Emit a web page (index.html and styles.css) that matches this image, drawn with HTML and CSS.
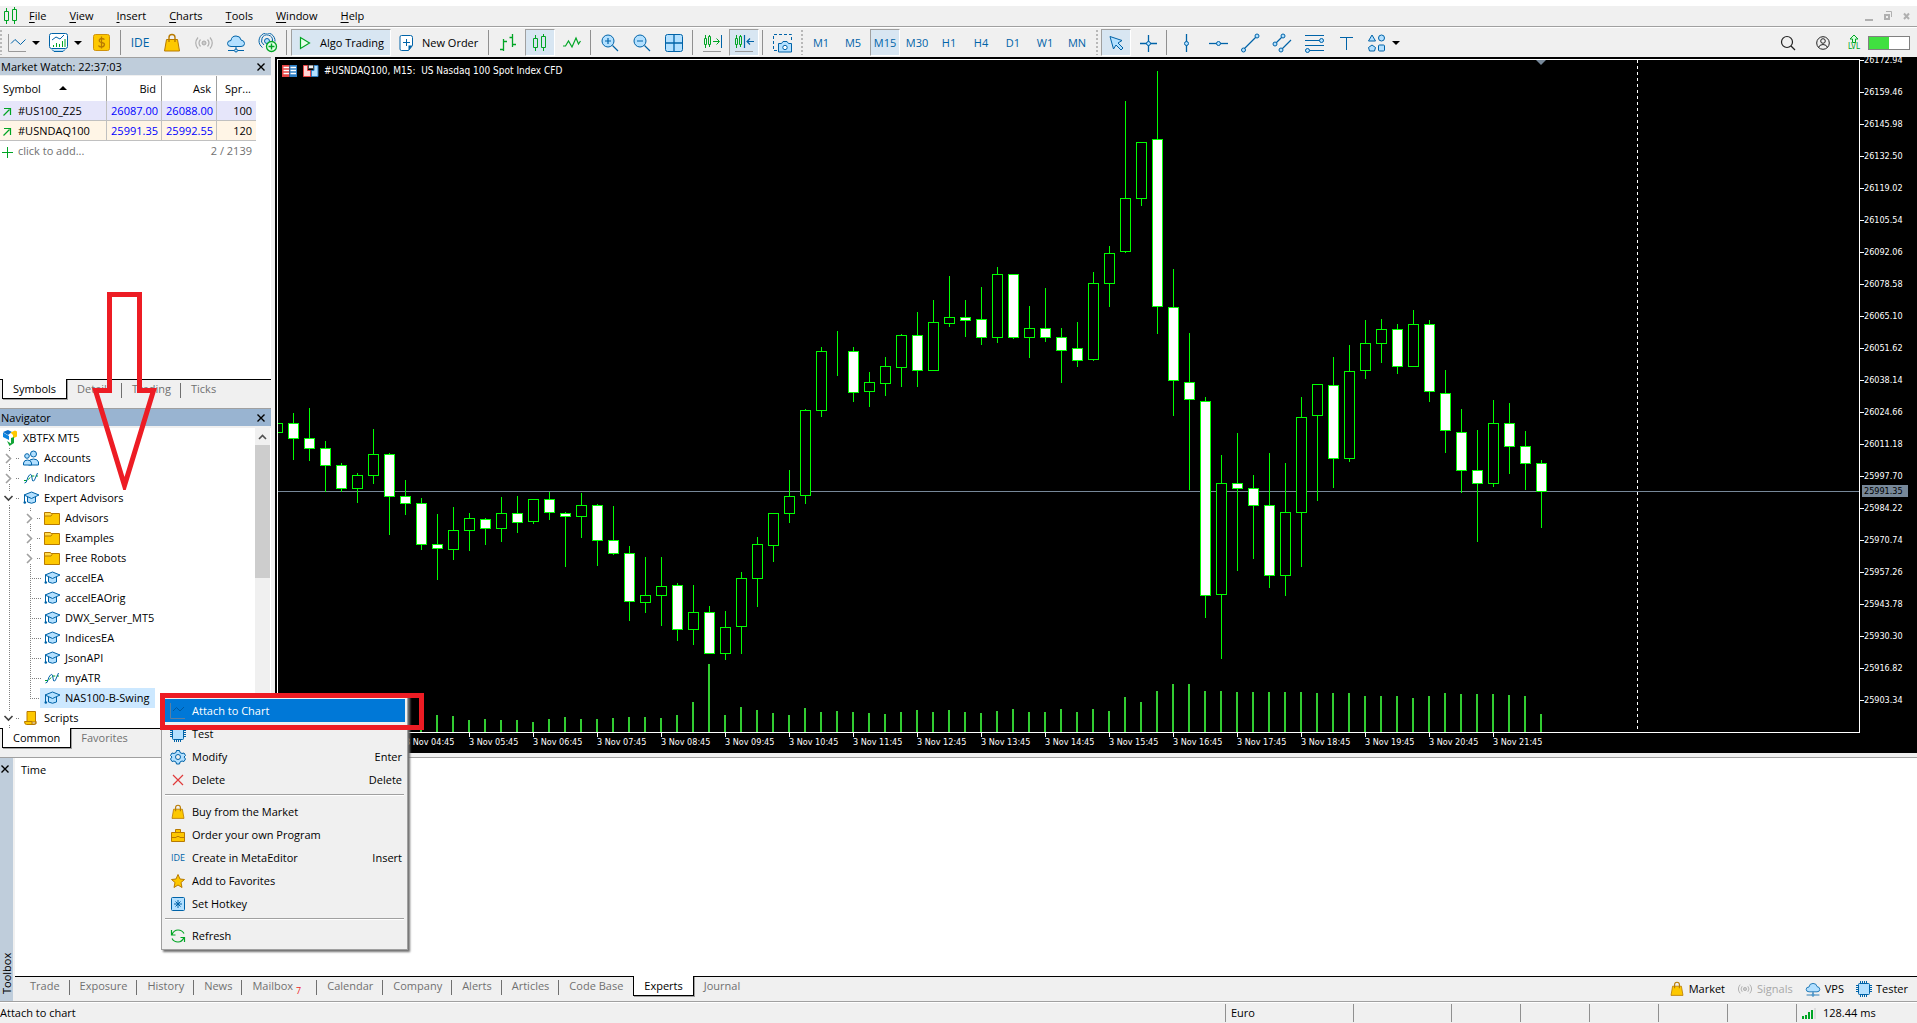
FILE: index.html
```html
<!DOCTYPE html>
<html lang="en">
<head>
<meta charset="utf-8">
<title>#USNDAQ100, M15</title>
<link rel="stylesheet" href="styles.css">
</head>
<body>
<svg class="sprite" aria-hidden="true">
  <defs>
    <symbol id="i-candles" viewBox="0 0 20 20"><path d="M5.500 2v3M5.500 15v3M13.500 1v3M13.500 14v4" stroke="#00a524"/><path d="M3.500 5.500h4v9h-4zM11.500 3.500h4v11h-4z" fill="none" stroke="#00a524"/></symbol>
    <symbol id="i-line" viewBox="0 0 20 20"><path d="M1.500 1v17.500H19" fill="none" stroke="#999"/><path d="M4 10.500l4-4 5.500 5 5-5" fill="none" stroke="#0063a8"/></symbol>
    <symbol id="i-indic" viewBox="0 0 20 20"><rect x=".5" y=".5" width="18" height="15" rx="2" fill="#fff" stroke="#0063a8"/><path d="M3 16.500l2 2h9l2-2" fill="#b3dcf8" stroke="#0063a8"/><path d="M3 7l4-3 4 2 4-4" fill="none" stroke="#0063a8"/><path d="M4.500 14v-2M7.500 14v-4M10.500 14v-3M13.500 14V8M16 14V6" stroke="#00a524"/></symbol>
    <symbol id="i-dollar" viewBox="0 0 20 20"><rect x="1.500" y="1.500" width="16" height="16" rx="2" fill="#fdc800" stroke="#d0930a"/><path d="M12.500 6.500Q9.500 4.500 7.500 6.500q-1 2.500 2 3t3 2q-.5 2.500-3 2.500t-3-1.500M9.500 3.500v12" fill="none" stroke="#b87a00" stroke-width="1.300"/></symbol>
    <symbol id="i-bag" viewBox="0 0 20 20"><path d="M4.500 6.500h11l2 11.500h-15z" fill="#fdc800" stroke="#b87a00"/><path d="M7 9V4.500Q7 1.500 10 1.500t3 3V9" fill="none" stroke="#b87a00" stroke-width="1.400"/></symbol>
    <symbol id="i-signal" viewBox="0 0 20 20"><circle cx="10" cy="10" r="2" fill="#ccc" stroke="#aaa"/><path d="M6.500 6.500q-3 3.500 0 7M13.500 6.500q3 3.500 0 7M4 4.500q-4.500 5.500 0 11M16 4.500q4.500 5.500 0 11" fill="none" stroke="#b0b0b0" stroke-width="1.200"/></symbol>
    <symbol id="i-cloud" viewBox="0 0 20 20"><path d="M5 13.500q-3.500 0-3.500-3t3.500-3q.5-4.500 5-4.500t5 4q3.500.5 3.500 3.500t-3.500 3z" fill="#b3e0ff" stroke="#0063a8"/><path d="M10 13.500V16M2 17.500h6M12 17.500h6" stroke="#0063a8"/><circle cx="10" cy="17.500" r="1.500" fill="#b3e0ff" stroke="#0063a8"/></symbol>
    <symbol id="i-copy" viewBox="0 0 20 20"><path d="M4.500 14.500a8 8 0 1 1 12.500-6M6 12a5.500 5.500 0 1 1 8.500-4" fill="none" stroke="#0063a8"/><circle cx="9" cy="8" r="2.500" fill="#b3e0ff" stroke="#0063a8"/><circle cx="13.500" cy="13.500" r="5" fill="#dfffe5" stroke="#00a524" stroke-width="1.300"/><path d="M13.500 10.500v6M10.500 13.500h6" stroke="#00a524" stroke-width="1.400"/></symbol>
    <symbol id="i-play" viewBox="0 0 20 20"><path d="M5.500 4.500v11l9-5.500z" fill="#e6ffea" stroke="#00a524" stroke-width="1.200"/></symbol>
    <symbol id="i-neworder" viewBox="0 0 20 20"><path d="M4.500 2.500h9q2 0 2 2v8l-4 5h-7q-1.500 0-1.500-1.500V4q0-1.500 1.500-1.500z" fill="#fff" stroke="#0063a8"/><path d="M15.500 12.500h-4v5z" fill="#0063a8"/><path d="M9.500 6v7M6 9.500h7" stroke="#0063a8"/></symbol>
    <symbol id="i-bars" viewBox="0 0 20 20"><path d="M5.500 6v12M2 16.500h3.500M5.500 8.500H9M14.500 1v13M11.500 4.500h3M14.500 11.500H18" stroke="#00a524" stroke-width="1.300"/></symbol>
    <symbol id="i-zig" viewBox="0 0 20 20"><path d="M1 13h2.500l3-5 3.500 6 4-9 2.500 6 2-3" fill="none" stroke="#00a524" stroke-width="1.200"/></symbol>
    <symbol id="i-zoomin" viewBox="0 0 20 20"><circle cx="8" cy="8" r="6" fill="#b3e0ff" stroke="#0063a8"/><path d="M12.500 12.500L18 18M8 5v6M5 8h6" stroke="#0063a8" stroke-width="1.200"/></symbol>
    <symbol id="i-zoomout" viewBox="0 0 20 20"><circle cx="8" cy="8" r="6" fill="#b3e0ff" stroke="#0063a8"/><path d="M12.500 12.500L18 18M5 8h6" stroke="#0063a8" stroke-width="1.200"/></symbol>
    <symbol id="i-grid" viewBox="0 0 20 20"><rect x="1.500" y="1.500" width="17" height="17" rx="2" fill="#b3e0ff" stroke="#0063a8"/><path d="M10 1.500v17M1.500 10h17" stroke="#0063a8" stroke-width="1.300"/></symbol>
    <symbol id="i-scroll" viewBox="0 0 20 20"><path d="M3.500 2v3M3.500 12v3M7.500 2v1M7.500 12v2M2.500 5.500h2v6h-2zM6.500 3.500h2v8h-2zM11 8.500h6M14.500 5.500l3 3-3 3" fill="none" stroke="#00a524"/><path d="M19.500 2v13" stroke="#0063a8"/><path d="M1 18.500h18" stroke="#999"/></symbol>
    <symbol id="i-shift" viewBox="0 0 20 20"><path d="M2.500 2v3M2.500 12v3M6.500 2v1M6.500 12v2M1.500 5.500h2v6h-2zM5.500 3.500h2v8h-2z" fill="none" stroke="#00a524"/><path d="M10.500 2v13M13 8.500h7M16 5.500l-3 3 3 3" fill="none" stroke="#0063a8" stroke-width="1.200"/><path d="M1 18.500h18" stroke="#999"/></symbol>
    <symbol id="i-camera" viewBox="0 0 20 20"><path d="M5 17.500H1.500v-16h18V7" fill="none" stroke="#0063a8" stroke-dasharray="3 2"/><path d="M6.500 10.500h3l1.500-2h4l1.500 2h3v8.500h-13z" fill="#b3e0ff" stroke="#0063a8"/><circle cx="13" cy="14.500" r="2.200" fill="#fff" stroke="#0063a8"/></symbol>
    <symbol id="i-cursor" viewBox="0 0 20 20"><path d="M4 3.500l12 4-4 2.500 5 5-2 2-5-5-2.500 4z" fill="#b3e0ff" stroke="#0063a8"/></symbol>
    <symbol id="i-cross" viewBox="0 0 20 20"><path d="M10.500 2v17M2 10.500h17" stroke="#0063a8" stroke-width="1.300"/><circle cx="10.500" cy="10.500" r="2" fill="#b3e0ff" stroke="#0063a8"/></symbol>
    <symbol id="i-vline" viewBox="0 0 20 20"><path d="M10.500 1v18" stroke="#0063a8" stroke-width="1.300"/><circle cx="10.500" cy="10.500" r="2" fill="#b3e0ff" stroke="#0063a8"/></symbol>
    <symbol id="i-hline" viewBox="0 0 20 20"><path d="M1 10.500h19" stroke="#0063a8" stroke-width="1.300"/><circle cx="10.500" cy="10.500" r="2" fill="#b3e0ff" stroke="#0063a8"/></symbol>
    <symbol id="i-trend" viewBox="0 0 20 20"><path d="M3 17L17 3" stroke="#0063a8" stroke-width="1.200"/><circle cx="3.500" cy="17" r="2" fill="#b3e0ff" stroke="#0063a8"/><circle cx="17" cy="3" r="2" fill="#b3e0ff" stroke="#0063a8"/></symbol>
    <symbol id="i-channel" viewBox="0 0 20 20"><path d="M3 11l8-8M9 17L19 7" stroke="#0063a8" stroke-width="1.200"/><circle cx="3" cy="11" r="2" fill="#b3e0ff" stroke="#0063a8"/><circle cx="11" cy="3" r="2" fill="#b3e0ff" stroke="#0063a8"/><circle cx="9" cy="17" r="2" fill="#b3e0ff" stroke="#0063a8"/></symbol>
    <symbol id="i-fibo" viewBox="0 0 20 20"><path d="M1 2.500h19M1 7.500h19M1 12.500h19M1 17.500h19" stroke="#0063a8"/><circle cx="17.500" cy="7.500" r="2" fill="#b3e0ff" stroke="#0063a8"/><circle cx="3.500" cy="17.500" r="2" fill="#b3e0ff" stroke="#0063a8"/></symbol>
    <symbol id="i-text" viewBox="0 0 20 20"><path d="M4 4.500h13M10.500 4.500V17" stroke="#0063a8"/></symbol>
    <symbol id="i-shapes" viewBox="0 0 20 20"><g fill="#b3e0ff" stroke="#0063a8"><path d="M5 2l3.500 6h-7z"/><circle cx="14.500" cy="5" r="3"/><path d="M5 12l3.500 2.500L7.500 18h-5l-1-3.500z"/><rect x="11.500" y="12" width="6" height="6" rx="1"/></g></symbol>
    <symbol id="i-search" viewBox="0 0 20 20"><circle cx="9" cy="9" r="5.500" fill="none" stroke="#222" stroke-width="1.200"/><path d="M13 13l4 4" stroke="#222" stroke-width="1.200"/></symbol>
    <symbol id="i-user" viewBox="0 0 20 20"><g fill="none" stroke="#222"><circle cx="10" cy="10" r="6.300"/><circle cx="10" cy="8" r="2.300"/><path d="M5.500 14.500q1-3 4.500-3t4.500 3"/></g></symbol>
    <symbol id="i-up" viewBox="0 0 12 9"><path d="M6 1l4 4H7.500v3.500h-3V5H2z" fill="#d8ffe0" stroke="#00a524"/></symbol>
    <symbol id="i-uparrow" viewBox="0 0 10 10"><path d="M1.500 8.500l6-6M2 1.500h6.500V8" fill="none" stroke="#00a524" stroke-width="1.200"/></symbol>
    <symbol id="i-plus" viewBox="0 0 12 12"><path d="M6.500 1v11M1 6.500h11" stroke="#00a524"/></symbol>
    <symbol id="i-close" viewBox="0 0 10 10"><path d="M1.500 1.500l7 7M8.500 1.500l-7 7" stroke="#000" stroke-width="1.400"/></symbol>
    <symbol id="i-logo" viewBox="0 0 16 16"><path d="M1 2.500L7 6v4L1 7z" fill="#0a84e0"/><path d="M1 2l5-2 4 2-4 3z" fill="#0a6fc9"/><path d="M8.500 2.500L13 .5l2 1v5L11 8.500V5z" fill="#fdc800"/><path d="M5 11l4 2.500V8l3-1v6L7.500 16z" fill="#12a537"/></symbol>
    <symbol id="i-accounts" viewBox="0 0 16 16"><g fill="#b3e0ff" stroke="#0063a8"><circle cx="10.500" cy="4" r="3"/><path d="M5.500 15v-3q1-3 5-3t5 3v3z"/><circle cx="4" cy="6" r="2.300"/><path d="M.5 15v-2q.5-3 4-3t4 3v2z"/></g></symbol>
    <symbol id="i-func" viewBox="0 0 16 16"><path d="M1 10.500h3L9 6h6" fill="none" stroke="#00a524" stroke-dasharray="3 1.500"/><path d="M1.500 13q2 0 2.500-3t2.500-5 2.500 3 2.500 2l3-7" fill="none" stroke="#0063a8"/></symbol>
    <symbol id="i-hat" viewBox="0 0 16 16"><path d="M4.500 7v5q4 2.500 8 0V7" fill="#b3e0ff" stroke="#0063a8"/><path d="M1 5l7.500-3L16 5 8.500 8.500z" fill="#b3e0ff" stroke="#0063a8"/><path d="M1.500 5v7" stroke="#0063a8"/><circle cx="1.800" cy="12.500" r="1.300" fill="#0063a8"/></symbol>
    <symbol id="i-folder" viewBox="0 0 16 16"><path d="M.5 3.500h15v11H.5z" fill="#fdc800" stroke="#b87a00"/><path d="M.5 5V2.500h6l1.500 2-1 1.500H.5z" fill="#ffdc4d" stroke="#b87a00"/></symbol>
    <symbol id="i-script" viewBox="0 0 16 16"><path d="M4 1.500h8.500V12H4z" fill="#fdc800" stroke="#b87a00"/><path d="M1.500 11.500H9V14h4v-2.500q0 3-2 3H3.500q-2 0-2-3z" fill="#fdc800" stroke="#b87a00"/></symbol>
    <symbol id="i-chip" viewBox="0 0 16 16"><path d="M4.500 0v16M6.500 0v16M8.500 0v16M10.500 0v16M0 4.500h16M0 6.500h16M0 8.500h16M0 10.500h16" stroke="#0063a8"/><rect x="2.500" y="2.500" width="11" height="11" rx="1" fill="#b3e0ff" stroke="#0063a8"/></symbol>
    <symbol id="i-gear" viewBox="0 0 16 16"><path d="M6.500 1.500h3l.5 2 2 1 2-.5 1.500 2.500-1.500 1.500 1.500 2-1.500 2.500-2-.5-2 1-.5 2h-3l-.5-2-2-1-2 .5L.5 10 2 8 .5 6.500 2 4l2 .5 2-1z" fill="#b3e0ff" stroke="#0063a8"/><circle cx="8" cy="8" r="2.500" fill="#f0f0f0" stroke="#0063a8"/></symbol>
    <symbol id="i-delete" viewBox="0 0 16 16"><path d="M3 3l10 10M13 3L3 13" stroke="#e03a3a" stroke-width="1.200"/></symbol>
    <symbol id="i-case" viewBox="0 0 16 16"><path d="M1.500 5.500h13v9h-13zM5.500 5V2.500h5V5" fill="#fdc800" stroke="#b87a00"/><path d="M1.500 10.500h5M9.500 10.500h5M6.500 9.500h3" stroke="#b87a00"/></symbol>
    <symbol id="i-star" viewBox="0 0 16 16"><path d="M8 1.500l2 4.500 4.500.5L11 9.500l1 5-4-2.500-4 2.500 1-5L1.500 6.500 6 6z" fill="#fdc800" stroke="#b87a00"/></symbol>
    <symbol id="i-hotkey" viewBox="0 0 16 16"><rect x="1.500" y="1.500" width="13" height="13" rx="1" fill="#b3e0ff" stroke="#0063a8"/><path d="M8 4v8M4 8h8M5.500 5.500l5 5M10.500 5.500l-5 5" stroke="#0063a8"/></symbol>
    <symbol id="i-refresh" viewBox="0 0 16 16"><path d="M2 6.500q2-4.500 6-4.500t6 3.500M1.500 2v5h4M14 9.500q-2 4.500-6 4.500t-6-3.500M14.500 14V9.500h-4" fill="none" stroke="#00a524" stroke-width="1.200"/></symbol>
    <symbol id="i-lineblue" viewBox="0 0 16 16"><path d="M.5 0v15.500H15" fill="none" stroke="#5c7fa0"/><path d="M3 8l3.500-3.500L10 8l4-4" fill="none" stroke="#0058a0"/></symbol>
    <symbol id="i-depth" viewBox="0 0 16 12"><path d="M0 0h7.500v12H0z" fill="#e64545"/><path d="M7.500 0H15v12H7.500z" fill="#2f7fc4"/><path d="M1.500 2.500H7M1.500 5.500H7M1.500 8.500H7M8.500 2.500H14M8.500 5.500H14M8.500 8.500H14" stroke="#fff" stroke-width="1.500"/></symbol>
    <symbol id="i-oneclick" viewBox="0 0 16 12"><path d="M.5 .5h4v5h3v6h-7z" fill="#ffd6d6" stroke="#e64545"/><path d="M15 .5h-4v5H8.500v6H15z" fill="#b3e0ff" stroke="#2f7fc4"/><path d="M5.500 0h5v3.500h-5z" fill="#eee" stroke="#444"/></symbol>
    <symbol id="t-closed" viewBox="0 0 21 20"><path d="M8.500 0v4M8.500 16v4M15 10.500h4" stroke="#808080" stroke-dasharray="1 1"/><path d="M5 6l4.500 4.500L5 15" fill="none" stroke="#a0a0a0" stroke-width="1.600"/></symbol>
    <symbol id="t-open" viewBox="0 0 21 20"><path d="M8.500 0v3M8.500 17v3M15 10.500h4" stroke="#808080" stroke-dasharray="1 1"/><path d="M3.500 8l4 4 4-4" fill="none" stroke="#404040" stroke-width="1.600"/></symbol>
    <symbol id="t-guide" viewBox="0 0 21 20"><path d="M8.500 0v20" stroke="#808080" stroke-dasharray="1 1"/></symbol>
    <symbol id="t-leaf" viewBox="0 0 21 20"><path d="M8.500 0v20M8 10.500h11" stroke="#808080" stroke-dasharray="1 1"/></symbol>
    <symbol id="t-last" viewBox="0 0 21 20"><path d="M8.500 0v11M8 10.500h11" stroke="#808080" stroke-dasharray="1 1" fill="none"/></symbol>
  </defs>
</svg>

<div class="app">
  <header>
    <div class="caption"></div>
    <nav class="menubar">
      <svg class="ic20"><use href="#i-candles"/></svg>
      <button><u>F</u>ile</button><button><u>V</u>iew</button><button><u>I</u>nsert</button><button><u>C</u>harts</button><button><u>T</u>ools</button><button><u>W</u>indow</button><button><u>H</u>elp</button>
      <span class="winctl"><svg width="50" height="12"><path d="M0 9h8v2H0z" fill="#b0b0b0"/><path d="M20 5h4v4h-4z" fill="none" stroke="#b0b0b0" stroke-width="2"/><path d="M21 1.500h5.500V7" fill="none" stroke="#b0b0b0"/><path d="M39 3.500l5 5.500M44 3.500L39 9" stroke="#b0b0b0" stroke-width="2"/></svg></span>
    </nav>
    <div class="toolbar">
      <span class="grip first"></span>
      <button class="tb drop" aria-label="Chart type"><svg class="ic20"><use href="#i-line"/></svg><i class="caret"></i></button>
      <button class="tb drop" aria-label="Indicators"><svg class="ic20"><use href="#i-indic"/></svg><i class="caret"></i></button>
      <button class="tb" aria-label="Symbols"><svg class="ic20"><use href="#i-dollar"/></svg></button>
      <span class="sep"></span>
      <button class="tb big">IDE</button>
      <button class="tb" aria-label="Market"><svg class="ic20"><use href="#i-bag"/></svg></button>
      <button class="tb" aria-label="Signals"><svg class="ic20"><use href="#i-signal"/></svg></button>
      <button class="tb" aria-label="VPS"><svg class="ic20"><use href="#i-cloud"/></svg></button>
      <button class="tb" aria-label="Add server"><svg class="ic20"><use href="#i-copy"/></svg></button>
      <span class="sep"></span>
      <button class="tb wide algo on"><svg class="ic20"><use href="#i-play"/></svg>Algo Trading</button>
      <button class="tb wide order"><svg class="ic20"><use href="#i-neworder"/></svg>New Order</button>
      <span class="sep"></span>
      <button class="tb" aria-label="Bars"><svg class="ic20"><use href="#i-bars"/></svg></button>
      <button class="tb on" aria-label="Candles"><svg class="ic20"><use href="#i-candles"/></svg></button>
      <button class="tb" aria-label="Line"><svg class="ic20"><use href="#i-zig"/></svg></button>
      <span class="sep"></span>
      <button class="tb" aria-label="Zoom in"><svg class="ic20"><use href="#i-zoomin"/></svg></button>
      <button class="tb" aria-label="Zoom out"><svg class="ic20"><use href="#i-zoomout"/></svg></button>
      <button class="tb" aria-label="Tile windows"><svg class="ic20"><use href="#i-grid"/></svg></button>
      <span class="sep"></span>
      <button class="tb" aria-label="Auto scroll"><svg class="ic20"><use href="#i-scroll"/></svg></button>
      <button class="tb on" aria-label="Chart shift"><svg class="ic20"><use href="#i-shift"/></svg></button>
      <span class="sep"></span>
      <button class="tb" aria-label="Screenshot"><svg class="ic20"><use href="#i-camera"/></svg></button>
      <span class="grip"></span>
      <button class="tb">M1</button><button class="tb">M5</button><button class="tb on">M15</button><button class="tb">M30</button><button class="tb">H1</button><button class="tb">H4</button><button class="tb">D1</button><button class="tb">W1</button><button class="tb">MN</button>
      <span class="grip"></span>
      <button class="tb on" aria-label="Cursor"><svg class="ic20"><use href="#i-cursor"/></svg></button>
      <button class="tb" aria-label="Crosshair"><svg class="ic20"><use href="#i-cross"/></svg></button>
      <span class="sep"></span>
      <button class="tb" aria-label="Vertical line"><svg class="ic20"><use href="#i-vline"/></svg></button>
      <button class="tb" aria-label="Horizontal line"><svg class="ic20"><use href="#i-hline"/></svg></button>
      <button class="tb" aria-label="Trendline"><svg class="ic20"><use href="#i-trend"/></svg></button>
      <button class="tb" aria-label="Channel"><svg class="ic20"><use href="#i-channel"/></svg></button>
      <button class="tb" aria-label="Fibonacci"><svg class="ic20"><use href="#i-fibo"/></svg></button>
      <button class="tb" aria-label="Text"><svg class="ic20"><use href="#i-text"/></svg></button>
      <button class="tb drop" aria-label="Shapes"><svg class="ic20"><use href="#i-shapes"/></svg><i class="caret"></i></button>
      <div class="tools-right">
        <button aria-label="Search"><svg class="ic20"><use href="#i-search"/></svg></button>
        <button aria-label="Profile"><svg class="ic20"><use href="#i-user"/></svg></button>
        <span class="level"><span class="lvl"><svg width="12" height="9"><use href="#i-up"/></svg>LVL</span><span class="battery"></span></span>
      </div>
    </div>
  </header>

  <main>
    <aside>
      <section class="panel watch">
        <h2 class="bar">Market Watch: 22:37:03<button aria-label="Close"><svg width="10" height="10"><use href="#i-close"/></svg></button></h2>
        <div class="body">
          <table>
            <colgroup><col class="c-sym"><col class="c-num"><col class="c-num"><col class="c-spr"></colgroup>
            <thead><tr><th>Symbol<i class="sort"></i></th><th>Bid</th><th>Ask</th><th>Spr...</th></tr></thead>
            <tbody>
              <tr class="a"><td><svg width="10" height="10"><use href="#i-uparrow"/></svg>#US100_Z25</td><td>26087.00</td><td>26088.00</td><td>100</td></tr>
              <tr class="b"><td><svg width="10" height="10"><use href="#i-uparrow"/></svg>#USNDAQ100</td><td>25991.35</td><td>25992.55</td><td>120</td></tr>
            </tbody>
            <tfoot><tr><td colspan="2"><svg width="12" height="12"><use href="#i-plus"/></svg>click to add...</td><td colspan="2">2 / 2139</td></tr></tfoot>
          </table>
        </div>
        <div class="tabs"><button class="cur">Symbols</button><button class="div">Details</button><button class="div">Trading</button><button>Ticks</button></div>
      </section>
      <section class="panel navi">
        <h2 class="bar active">Navigator<button aria-label="Close"><svg width="10" height="10"><use href="#i-close"/></svg></button></h2>
        <div class="body split">
          <ul class="tree">
            <li><svg class="ic16"><use href="#i-logo"/></svg>XBTFX MT5</li>
            <li><svg class="tc"><use href="#t-closed"/></svg><svg class="ic16"><use href="#i-accounts"/></svg>Accounts</li>
            <li><svg class="tc"><use href="#t-closed"/></svg><svg class="ic16"><use href="#i-func"/></svg>Indicators</li>
            <li><svg class="tc"><use href="#t-open"/></svg><svg class="ic16"><use href="#i-hat"/></svg>Expert Advisors</li>
            <li><svg class="tc"><use href="#t-guide"/></svg><svg class="tc"><use href="#t-closed"/></svg><svg class="ic16"><use href="#i-folder"/></svg>Advisors</li>
            <li><svg class="tc"><use href="#t-guide"/></svg><svg class="tc"><use href="#t-closed"/></svg><svg class="ic16"><use href="#i-folder"/></svg>Examples</li>
            <li><svg class="tc"><use href="#t-guide"/></svg><svg class="tc"><use href="#t-closed"/></svg><svg class="ic16"><use href="#i-folder"/></svg>Free Robots</li>
            <li><svg class="tc"><use href="#t-guide"/></svg><svg class="tc"><use href="#t-leaf"/></svg><svg class="ic16"><use href="#i-hat"/></svg>accelEA</li>
            <li><svg class="tc"><use href="#t-guide"/></svg><svg class="tc"><use href="#t-leaf"/></svg><svg class="ic16"><use href="#i-hat"/></svg>accelEAOrig</li>
            <li><svg class="tc"><use href="#t-guide"/></svg><svg class="tc"><use href="#t-leaf"/></svg><svg class="ic16"><use href="#i-hat"/></svg>DWX_Server_MT5</li>
            <li><svg class="tc"><use href="#t-guide"/></svg><svg class="tc"><use href="#t-leaf"/></svg><svg class="ic16"><use href="#i-hat"/></svg>IndicesEA</li>
            <li><svg class="tc"><use href="#t-guide"/></svg><svg class="tc"><use href="#t-leaf"/></svg><svg class="ic16"><use href="#i-hat"/></svg>JsonAPI</li>
            <li><svg class="tc"><use href="#t-guide"/></svg><svg class="tc"><use href="#t-leaf"/></svg><svg class="ic16"><use href="#i-func"/></svg>myATR</li>
            <li><svg class="tc"><use href="#t-guide"/></svg><svg class="tc"><use href="#t-last"/></svg><span class="sel"><svg class="ic16"><use href="#i-hat"/></svg>NAS100-B-Swing</span></li>
            <li><svg class="tc"><use href="#t-open"/></svg><svg class="ic16"><use href="#i-script"/></svg>Scripts</li>
          </ul>
          <div class="scroll"><svg width="15" height="17"><path d="M4 11l3.500-3.500L11 11" fill="none" stroke="#505050" stroke-width="1.600"/></svg><span></span></div>
        </div>
        <div class="tabs"><button class="cur">Common</button><button>Favorites</button></div>
      </section>
    </aside>

    <section class="chart">
      <div class="plot">
        <svg id="plot" width="100%" height="100%"></svg>
        <p class="chart-title"><svg width="16" height="12"><use href="#i-depth"/></svg><svg width="16" height="12"><use href="#i-oneclick"/></svg>#USNDAQ100, M15:&nbsp; US Nasdaq 100 Spot Index CFD</p>
      </div>
      <ol class="prices" id="prices"></ol>
      <ol class="times" id="times"></ol>
    </section>
  </main>

  <section class="toolbox">
    <div class="side"><button aria-label="Close"><svg width="10" height="10"><use href="#i-close"/></svg></button><span>Toolbox</span></div>
    <div class="tbody">
      <table class="log"><thead><tr><th class="when">Time</th><th>Message</th></tr></thead></table>
      <div class="tabs">
        <button class="div">Trade</button><button class="div">Exposure</button><button class="div">History</button><button class="div">News</button><button class="div">Mailbox<sub>7</sub></button><button class="div">Calendar</button><button class="div">Company</button><button class="div">Alerts</button><button class="div">Articles</button><button>Code Base</button><button class="cur">Experts</button><button>Journal</button>
        <div class="services">
          <a href="#market"><svg class="ic16"><use href="#i-bag"/></svg>Market</a>
          <a href="#signals" class="off"><svg class="ic16"><use href="#i-signal"/></svg>Signals</a>
          <a href="#vps"><svg class="ic16"><use href="#i-cloud"/></svg>VPS</a>
          <a href="#tester"><svg class="ic16"><use href="#i-chip"/></svg>Tester</a>
        </div>
      </div>
    </div>
  </section>

  <footer>
    <span class="hint">Attach to chart</span><span class="s-profile">Euro</span><span class="s-wide"></span><span></span><span></span><span></span><span></span><span></span>
    <span class="s-ping"><svg width="14" height="11"><path d="M1 8v3M4 7v4M7 4v7M10 2v9" stroke="#00a524" stroke-width="2"/><path d="M13 0v11" stroke="#ddd" stroke-width="2"/></svg>128.44 ms</span>
  </footer>

  <div class="ctx" role="menu">
    <button class="hot" role="menuitem"><svg class="ic16"><use href="#i-lineblue"/></svg>Attach to Chart</button>
    <button role="menuitem"><svg class="ic16"><use href="#i-chip"/></svg>Test</button>
    <button role="menuitem"><svg class="ic16"><use href="#i-gear"/></svg>Modify<kbd>Enter</kbd></button>
    <button role="menuitem"><svg class="ic16"><use href="#i-delete"/></svg>Delete<kbd>Delete</kbd></button>
    <hr>
    <button role="menuitem"><svg class="ic16"><use href="#i-bag"/></svg>Buy from the Market</button>
    <button role="menuitem"><svg class="ic16"><use href="#i-case"/></svg>Order your own Program</button>
    <button role="menuitem"><b class="ide">IDE</b>Create in MetaEditor<kbd>Insert</kbd></button>
    <button role="menuitem"><svg class="ic16"><use href="#i-star"/></svg>Add to Favorites</button>
    <button role="menuitem"><svg class="ic16"><use href="#i-hotkey"/></svg>Set Hotkey</button>
    <hr>
    <button role="menuitem"><svg class="ic16"><use href="#i-refresh"/></svg>Refresh</button>
  </div>
  <div class="mark-box"></div>
  <svg class="mark-arrow" width="70" height="200"><path d="M19.500 4.500h30v96h14l-29 95-29-95h14z" fill="none" stroke="#ed1c24" stroke-width="5"/></svg>
</div>
<script src="chart.js"></script>
</body>
</html>
```
FILE: styles.css
```css
* { box-sizing: border-box; }
body {
  margin: 0;
  background: #f0f0f0;
  color: #000;
  font: 11px/16px "Open Sans", "Noto Sans", sans-serif;
}
button {
  border: 0;
  padding: 0;
  margin: 0;
  background: none;
  font: inherit;
  color: inherit;
  display: flex;
  align-items: center;
  white-space: nowrap;
}
svg { display: block; flex: none; }
ul, ol, h2, p { margin: 0; padding: 0; list-style: none; font-size: inherit; font-weight: 400; }
a { color: inherit; text-decoration: none; }
.sprite { position: absolute; width: 0; height: 0; }
.ic20 { width: 20px; height: 20px; }
.ic16 { width: 16px; height: 16px; }

.app { position: relative; min-height: 100vh; display: flex; flex-direction: column; overflow: hidden; }

/* menu bar */
.caption { height: 6px; background: #fff; }
.menubar { display: flex; align-items: center; height: 22px; gap: 23px; border-bottom: 1px solid #fff; box-shadow: inset 0 -1px #a0a0a0; padding: 0 2px 2px 0; }
.menubar .ic20 { margin-right: -15px; }
.menubar > svg { margin-left: 1px; }
.menubar u { text-underline-offset: 2px; }
.winctl { margin-left: auto; }

/* toolbar */
.toolbar { display: flex; align-items: center; height: 29px; }
.tb { width: 32px; height: 27px; flex: none; justify-content: center; color: #0063a8; border: 1px solid transparent; background-clip: padding-box; }
.tb.on { background: #d8e6f2; border-color: #a0a0a0 #fff #fff #a0a0a0; width: 30px; margin: 0 1px; }
.tb.big { font-size: 12px; }
.tb.wide { color: #000; justify-content: flex-start; gap: 5px; }
.tb.algo { width: 100px; padding-left: 3px; }
.tb.order { width: 94px; padding-left: 4px; }
.tb.drop { width: 42px; gap: 5px; }
.caret { border: 4px solid transparent; border-top-color: #000; border-bottom: 0; }
.sep { flex: none; width: 1px; height: 25px; margin: 0 3px 0 2px; background: #909090; }
.grip { flex: none; width: 2px; height: 25px; margin: 0 2px 0 3px; background: repeating-linear-gradient(#b8b8b8 0 2px, transparent 2px 4px); }
.grip.first { margin: 0; }
.tools-right { margin-left: auto; display: flex; align-items: center; gap: 15px; padding-right: 7px; }
.level { display: flex; align-items: center; gap: 8px; }
.lvl { display: flex; flex-direction: column; align-items: center; color: #00a524; font: 8px/8px "DejaVu Sans Condensed", "DejaVu Sans", sans-serif; }
.battery { width: 42px; height: 14px; border: 1px solid #808080; background: linear-gradient(90deg, #40e040 50%, #fff 50%); }

/* main area */
main { flex: 1; display: flex; gap: 4px; }
aside { width: 271px; display: flex; flex-direction: column; }
.panel { display: flex; flex-direction: column; }
.watch { flex: 1; }
.bar { display: flex; align-items: center; justify-content: space-between; height: 18px; padding: 0 5px 0 1px; background: #bfcddb; border-top: 1px solid #a0a0a0; }
.bar.active { background: #99b4d1; }
.body { flex: 1; background: #fff; }
.watch .body { margin-top: 1px; }
.watch table { width: 256px; table-layout: fixed; border-collapse: separate; border-spacing: 0; }
.c-sym { width: 107px; }
.c-num { width: 55px; }
.c-spr { width: 39px; }
.watch th { height: 25px; padding: 0 5px; font-weight: 400; text-align: right; border-right: 1px solid #a0a0a0; }
.watch th:first-child { text-align: left; padding-left: 3px; }
.watch th:last-child { border-right: 0; }
.sort { display: inline-block; margin: 0 0 3px 18px; border: 4px solid transparent; border-bottom-color: #000; border-top: 0; }
.watch td { height: 20px; padding: 0 3px; text-align: right; border-right: 1px solid #c0c0c0; border-bottom: 1px solid #c0c0c0; color: #00f; }
.watch td:first-child { text-align: left; padding-left: 2px; color: #000; }
.watch td:last-child { color: #000; border-right: 0; padding-right: 4px; }
.watch td svg { display: inline-block; margin-right: 6px; vertical-align: middle; }
.watch tfoot td:first-child { padding-left: 1px; }
.watch tfoot td svg { margin-right: 5px; }
.a td { background: #e6e6fa; }
.b td { background: #fff5e6; }
.watch tfoot td, .watch tfoot td:first-child, .watch tfoot td:last-child { border: 0; color: #707070; }

/* tab strips */
.tabs { display: flex; align-items: flex-start; height: 25px; padding-left: 2px; box-shadow: inset 0 1px #000; color: #707070; }
.watch .tabs { height: 29px; }
.tabs > button { position: relative; height: 20px; padding: 0 10px; }
.tabs > .cur { background: #fff; color: #000; border: 1px solid #000; border-top: 0; box-shadow: 1px 1px #a0a0a0; padding: 0 10px; }
.div::after { content: ""; position: absolute; right: 0; top: 4px; width: 1px; height: 15px; background: #707070; }

/* navigator */
.split { display: flex; margin-top: 2px; }
.tree { flex: 1; }
.tree li { display: flex; align-items: center; height: 20px; padding-left: 1px; }
.tree .ic16 { margin: 0 5px 0 1px; }
.tc { width: 21px; height: 20px; }
.sel { display: flex; align-items: center; height: 20px; background: #cce8ff; margin-left: -3px; padding: 0 6px 0 3px; }
.scroll { width: 16px; background: #f0f0f0; border-right: 1px solid #fff; }
.scroll span { display: block; height: 133px; background: #cdcdcd; }

/* chart */
.chart { flex: 1; min-width: 0; display: grid; grid-template: 1fr 20px / 1fr 57px; padding: 2px 0 0 2px; background: #000; color: #fff; font: 9px/12px "DejaVu Sans Condensed", "Noto Sans", sans-serif; overflow: hidden; }
.plot { position: relative; border: 1px solid #fff; }
.plot > svg { position: absolute; inset: 0; }
.chart-title { position: absolute; left: 4px; top: 5px; display: flex; align-items: center; gap: 5px; font-size: 10px; }
.prices { position: relative; margin-top: -5px; }
.prices li { height: 32px; display: flex; align-items: flex-start; }
.prices li::before { content: ""; width: 4px; height: 1px; margin-top: 6px; background: #fff; }
.prices .last { position: absolute; left: 2px; top: 431px; height: 12px; width: 46px; padding-left: 2px; background: #778899; color: #000; }
.prices .last::before { display: none; }
.times { grid-column: 1 / 3; display: flex; }
.times li { width: 64px; flex: none; position: relative; padding-top: 3px; white-space: nowrap; }
.times li::before { content: ""; position: absolute; left: 0; top: 0; width: 1px; height: 4px; background: #fff; }

/* toolbox */
.toolbox { display: flex; gap: 2px; height: 244px; margin-top: 4px; border-top: 1px solid #a0a0a0; }
.side { width: 13px; background: #bfcddb; display: flex; flex-direction: column; justify-content: space-between; align-items: flex-start; padding: 6px 0; }
.side span { writing-mode: vertical-rl; transform: rotate(180deg); line-height: 13px; height: 44px; text-align: center; }
.tbody { flex: 1; display: flex; flex-direction: column; justify-content: space-between; background: #fff; }
.log { width: 100%; table-layout: fixed; border-collapse: collapse; }
.log th { font-weight: 400; text-align: left; padding: 4px 6px; }
.log .when { width: 340px; }
.tbody .tabs { background: #f0f0f0; padding-left: 5px; }
.tabs sub { color: #ed1c24; font-size: 9px; line-height: 9px; margin: 8px 6px 0 3px; vertical-align: baseline; }
.services { margin-left: auto; display: flex; align-items: center; height: 26px; gap: 12px; padding-right: 9px; color: #000; }
.services a { display: flex; align-items: center; gap: 4px; }
.services .off { color: #a8a8a8; }

/* status bar */
footer { display: flex; height: 22px; border-top: 1px solid #a0a0a0; box-shadow: inset 0 1px #fff; }
footer span { width: 69px; margin-top: 2px; height: 18px; border-left: 1px solid #909090; line-height: 18px; display: flex; align-items: center; }
footer .hint { flex: 1; border: 0; }
footer .s-profile { width: 128px; padding-left: 5px; }
footer .s-wide { width: 98px; }
footer .s-ping { width: 121px; padding-left: 5px; gap: 7px; }

/* context menu and markings over the window */
.ctx { position: absolute; left: 161px; top: 695px; width: 247px; padding: 3px 2px 2px 3px; background: #f0f0f0; border: 1px solid #a0a0a0; box-shadow: 2px 2px 2px #707070; }
.ctx button { width: 100%; height: 23px; padding: 0 3px 0 5px; gap: 6px; }
.ctx .hot { background: #0078d7; color: #fff; }
.ctx kbd { margin-left: auto; font: inherit; }
.ctx hr { height: 2px; margin: 3px 1px 4px 0; border: 0; border-top: 1px solid #a0a0a0; background: #fff; }
.ide { width: 16px; color: #0063a8; font: 9px/12px "Open Sans", sans-serif; }
.mark-box { position: absolute; left: 160px; top: 693px; width: 264px; height: 37px; border: 5px solid #ed1c24; }
.mark-arrow { position: absolute; left: 90px; top: 290px; }
```
FILE: chart.js
```js
// Each candle: [high, body top, body bottom, low, falling?, volume top], in screen rows.
const candles = [
[423,423,432,432,0,720],[413,423,438,459,1,720],[408,438,448,460,1,720],[441,448,465,491,1,720],[463,465,488,491,1,720],
[473,475,488,502,0,720],[429,454,475,483,0,720],[453,454,496,534,1,720],[480,496,503,514,1,720],[498,503,544,549,1,715],
[514,544,548,579,1,715],[507,530,549,559,0,716],[513,518,530,550,0,720],[518,519,528,544,1,719],[497,513,528,541,0,720],
[496,513,522,532,1,720],[499,499,521,523,0,722],[492,499,512,519,1,719],[512,513,516,566,1,717],[493,505,516,537,0,719],
[504,505,540,565,1,719],[506,540,553,554,1,718],[546,553,601,620,1,717],[557,595,602,612,0,717],[557,586,595,625,0,718],
[583,585,629,640,1,715],[585,612,629,644,0,702],[606,612,653,653,1,664],[611,627,653,659,0,715],[572,578,626,653,0,707],
[537,544,578,606,0,710],[513,513,545,561,0,713],[470,496,513,522,0,715],[409,410,495,503,0,708],[347,351,410,416,0,712],
[331,351,351,375,0,711],[347,351,392,401,1,712],[372,382,391,406,0,713],[357,366,383,395,0,714],[334,335,367,386,0,712],
[312,335,370,386,1,710],[300,322,370,370,0,712],[276,317,323,326,0,710],[300,317,320,336,1,712],[287,319,337,344,1,713],
[267,274,337,342,0,711],[274,274,337,338,1,709],[306,328,337,357,0,712],[288,328,337,341,1,712],[328,337,350,382,1,709],
[322,348,360,366,1,712],[272,283,359,360,0,709],[246,253,283,306,0,711],[101,198,251,252,0,697],[142,142,198,205,0,702],
[71,139,306,333,1,691],[269,307,380,415,1,684],[333,382,399,489,1,684],[397,401,595,617,1,691],[455,483,594,658,0,691],
[433,483,488,570,1,692],[475,488,505,558,1,692],[453,505,575,587,1,692],[463,512,575,595,0,692],[397,417,512,566,0,692],
[384,384,415,500,0,693],[357,385,458,487,1,693],[345,371,458,461,0,693],[320,343,370,378,0,696],[319,329,343,362,0,696],
[324,329,366,373,1,696],[310,324,366,366,0,698],[320,324,391,401,1,696],[370,393,430,452,1,693],[409,432,470,492,1,694],
[430,470,483,541,1,694],[400,423,483,486,0,694],[403,423,446,473,1,695],[431,446,463,489,1,696],[460,463,491,527,1,714]
];
const TOP = 60, BASE = 732, STEP = 16, LAST_PRICE = 491;
const rect = (x, y, w, h, fill, extra = "") =>
  `<rect x="${x}" y="${y}" width="${w}" height="${h}" fill="${fill}" ${extra}/>`;

let out = rect(0, LAST_PRICE - TOP, "100%", 1, "#778899");
candles.forEach(([high, top, bottom, low, falling, vol], i) => {
  const x = i * STEP - 1;
  out += rect(x - 1, vol - TOP, 2, BASE - vol, "#32cd32");
  out += rect(x, high - TOP, 1, low - high + 1, "#0f0");
  out += rect(x - 4.5, top - TOP + .5, 10, bottom - top, falling ? "#fff" : "#000", 'stroke="#0f0"');
});
out += '<path d="M1359.500 0V2000" stroke="#fff" stroke-dasharray="3 3"/>';
out += '<path d="M1258 0h10l-5 5z" fill="#778899"/>';
document.getElementById("plot").innerHTML = out;

let rows = "";
for (let i = 0; i < 21; i++) rows += `<li>${(26172.94 - i * 13.48).toFixed(2)}</li>`;
document.getElementById("prices").innerHTML = rows + '<li class="last">25991.35</li>';

let cols = "";
for (let h = 2; h < 22; h++) cols += `<li>3 Nov ${String(h).padStart(2, "0")}:45</li>`;
document.getElementById("times").innerHTML = cols;
```
